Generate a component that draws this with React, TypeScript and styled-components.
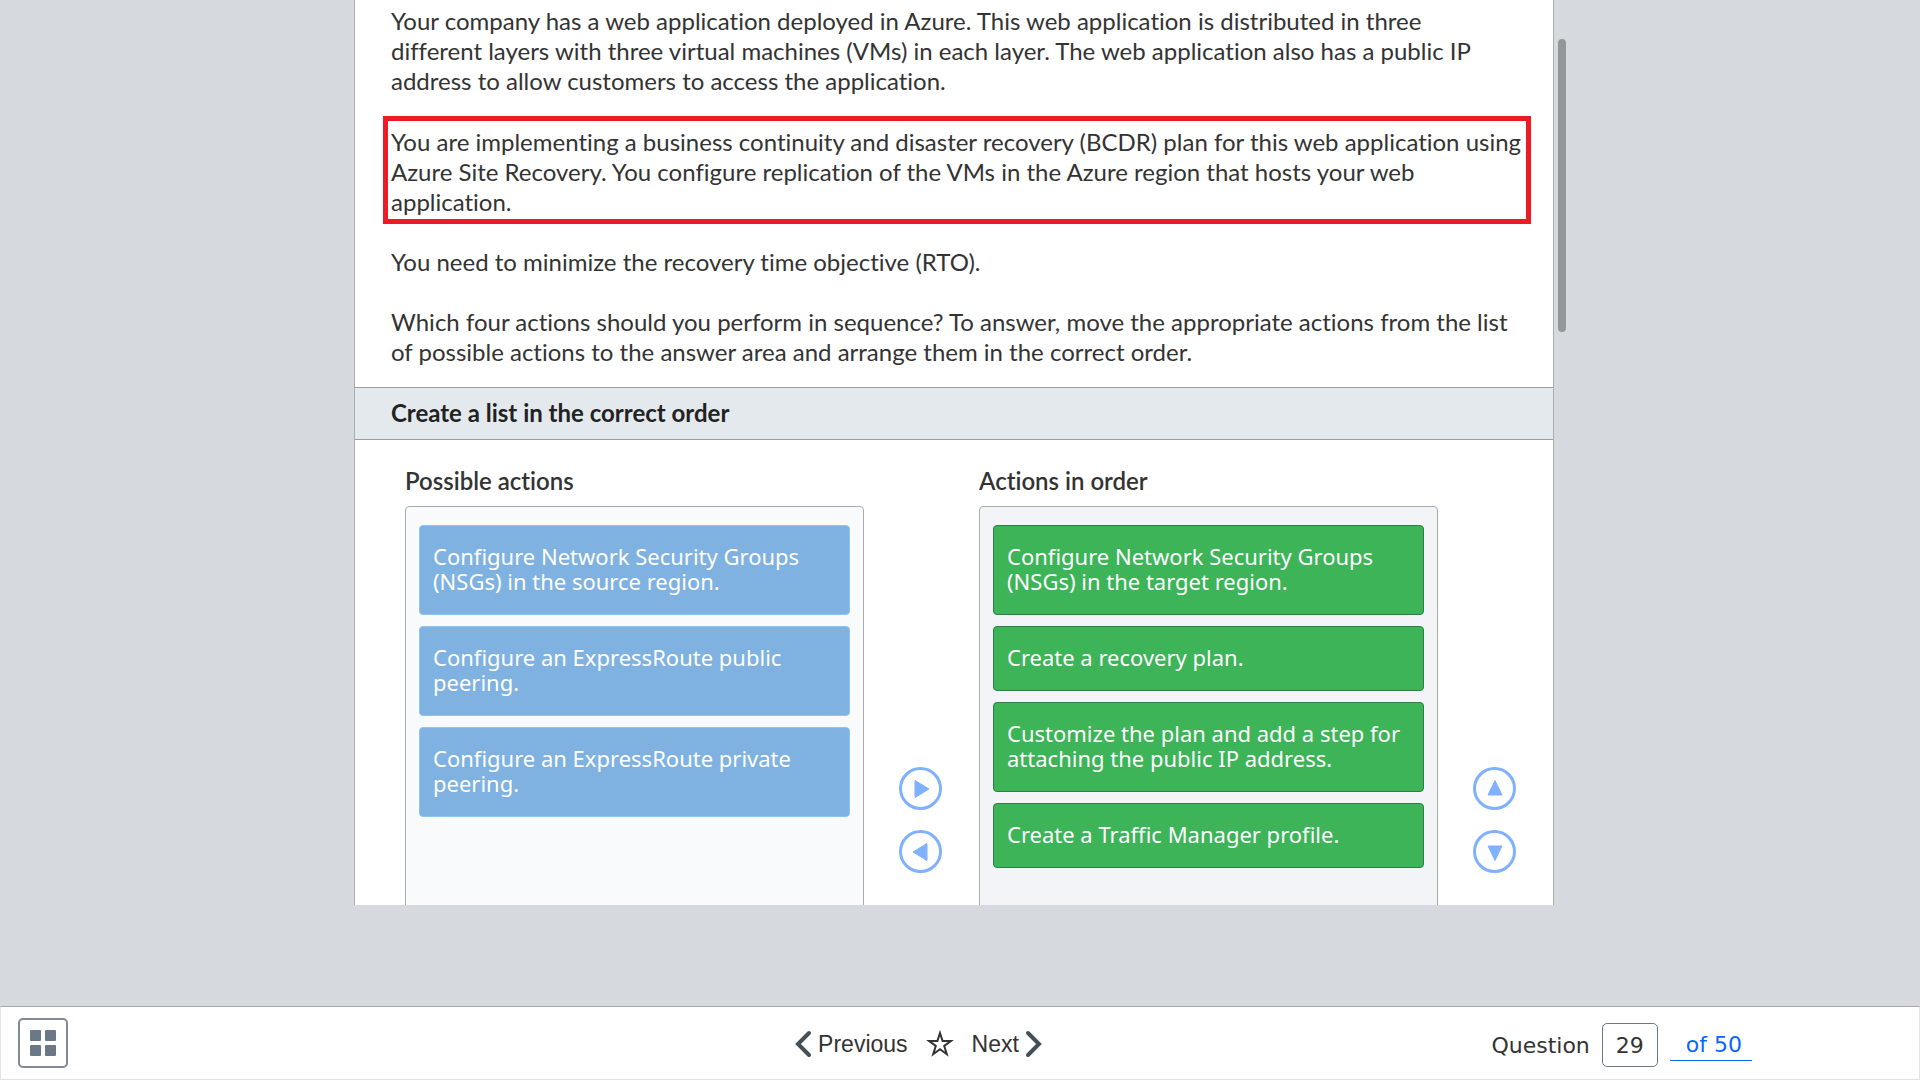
import React, { useState } from 'react';
import styled, { createGlobalStyle } from 'styled-components';

const GlobalStyle = createGlobalStyle`
  * { box-sizing: border-box; }
  html, body { margin: 0; padding: 0; }
  body {
    background: #d6d9de;
    color: #333;
    font-family: Lato, "Open Sans", sans-serif;
    font-variant-ligatures: no-common-ligatures;
  }
  button, input { font: inherit; color: inherit; }
`;

const Page = styled.div`
  display: flex;
  flex-direction: column;
  height: 100vh;
  overflow: hidden;
`;

const Stage = styled.main`
  flex: 1;
  min-height: 0;
  display: flex;
  justify-content: center;
  padding-bottom: 101px;
`;

const Card = styled.article`
  width: 100%;
  max-width: 1200px;
  overflow: hidden;
  background: #fff;
  border: solid #aaacae;
  border-width: 0 1px;
`;

const ScrollTrack = styled.div`
  width: 12px;
  padding: 39px 0 0 4px;
`;

const ScrollThumb = styled.div`
  height: 293px;
  border-radius: 4px;
  background: #939799;
`;

const Prompt = styled.section`
  display: flex;
  flex-direction: column;
  gap: 30px;
  padding: 6px 22px 20px 28px;
  font-size: 24px;
  line-height: 30px;
`;

const Paragraph = styled.p`
  margin: 0;
  padding: 0 8px;
`;

const Highlighted = styled(Paragraph)`
  margin: -10px 0 -7px;
  padding: 6px 0 2px 3px;
  border: 5px solid #ed1c24;
`;

const SectionTitle = styled.h2`
  margin: 0;
  padding: 10px 36px 11px;
  border: solid #9b9fa2;
  border-width: 1px 0;
  background: #e4e9ed;
  color: #222;
  font-size: 24px;
  font-weight: 700;
  line-height: 30px;
`;

const Board = styled.div`
  display: grid;
  grid-template-columns: 1fr 115px 1fr 115px;
  padding: 26px 0 26px 50px;
`;

const ListTitle = styled.h3`
  margin: 0;
  padding-bottom: 10px;
  font-size: 24px;
  font-weight: 600;
  line-height: 30px;
`;

const ListBox = styled.ul<{ $shade: string }>`
  display: flex;
  flex-direction: column;
  gap: 11px;
  height: 628px;
  margin: 0;
  padding: 18px 13px;
  list-style: none;
  border: 1px solid #a9abad;
  border-radius: 4px;
  background: ${(p) => p.$shade};
`;

const ActionButton = styled.button<{ $placed?: boolean }>`
  display: block;
  width: 100%;
  padding: 18px 13px 20px;
  border: 1px solid ${(p) => (p.$placed ? '#2b803f' : '#8cc4f2')};
  border-radius: 4px;
  background: ${(p) => (p.$placed ? '#3cb457' : '#7fb2e0')};
  color: #fff;
  font-family: "Noto Sans", "Open Sans", sans-serif;
  font-size: 22px;
  line-height: 25px;
  text-align: left;
  cursor: pointer;
`;

const Movers = styled.div`
  display: flex;
  flex-direction: column;
  justify-content: center;
  gap: 20px;
  padding: 40px 0 0 35px;
`;

const RoundButton = styled.button`
  width: 43px;
  height: 43px;
  padding: 0;
  border: 3px solid #80b1ff;
  border-radius: 50%;
  background: #fff;
  color: #80b1ff;
  display: grid;
  place-items: center;
  cursor: pointer;
`;

const Footer = styled.footer`
  display: grid;
  grid-template-columns: 1fr auto 1fr;
  align-items: center;
  height: 74px;
  padding: 0 100px 0 17px;
  border: 1px solid #e3e4e5;
  border-top-color: #a5abaf;
  background: #fff;
`;

const GridButton = styled.button`
  display: grid;
  grid-template-columns: 11px 11px;
  grid-auto-rows: 11px;
  place-content: center;
  gap: 4px;
  width: 50px;
  height: 50px;
  padding: 0;
  border: 2px solid #7f8b97;
  border-radius: 5px;
  background: #fff;
  cursor: pointer;
`;

const Tile = styled.span`
  border-radius: 1px;
  background: #6b7885;
`;

const Nav = styled.nav`
  display: flex;
  align-items: center;
  gap: 18px;
  padding-top: 2px;
  font-family: "Liberation Sans", Arial, sans-serif;
  font-size: 23px;
`;

const NavButton = styled.button`
  display: flex;
  align-items: center;
  gap: 6px;
  padding: 0;
  border: 0;
  background: none;
  cursor: pointer;
`;

const Pager = styled.div`
  justify-self: end;
  display: flex;
  align-items: center;
  gap: 12px;
  padding-top: 4px;
  margin-right: 67px;
  font-family: "DejaVu Sans", Verdana, sans-serif;
  font-size: 22px;
`;

const PageInput = styled.input`
  width: 56px;
  height: 44px;
  padding: 0;
  border: 1px solid #6b7885;
  border-radius: 5px;
  background: #fff;
  text-align: center;
`;

const TotalLink = styled.a`
  padding: 0 10px 0 16px;
  border-bottom: 1px solid #0a66ff;
  color: #0a66ff;
  line-height: 30px;
  text-decoration: none;
`;

const possible = [
  'Configure Network Security Groups (NSGs) in the source region.',
  'Configure an ExpressRoute public peering.',
  'Configure an ExpressRoute private peering.',
];

const ordered = [
  'Configure Network Security Groups (NSGs) in the target region.',
  'Create a recovery plan.',
  'Customize the plan and add a step for attaching the public IP address.',
  'Create a Traffic Manager profile.',
];

const arrows = {
  right: 'M5 2.5 L19 11 L5 19.5 Z',
  left: 'M17 2.5 L3 11 L17 19.5 Z',
  up: 'M11 2.5 L18 17 L4 17 Z',
  down: 'M11 19.5 L18 5 L4 5 Z',
};

function MoveButton({ dir, label }: { dir: keyof typeof arrows; label: string }) {
  return (
    <RoundButton type="button" aria-label={label}>
      <svg width="22" height="22" viewBox="0 0 22 22" aria-hidden="true">
        <path d={arrows[dir]} fill="currentColor" stroke="currentColor" strokeLinejoin="round" />
      </svg>
    </RoundButton>
  );
}

function Chevron({ d }: { d: string }) {
  return (
    <svg width="18" height="28" viewBox="0 0 18 28" fill="none" stroke="#435059" strokeWidth="4" strokeLinecap="round" aria-hidden="true">
      <path d={d} />
    </svg>
  );
}

export default function App() {
  const [page, setPage] = useState('29');
  return (
    <Page>
      <GlobalStyle />
      <Stage>
        <Card>
          <Prompt>
            <Paragraph>
              Your company has a web application deployed in Azure. This web application is distributed in three
              <br />
              different layers with three virtual machines (VMs) in each layer. The web application also has a public IP
              address to allow customers to access the application.
            </Paragraph>
            <Highlighted>
              You are implementing a business continuity and disaster recovery (BCDR) plan for this web application using
              Azure Site Recovery. You configure replication of the VMs in the Azure region that hosts your web
              application.
            </Highlighted>
            <Paragraph>You need to minimize the recovery time objective (RTO).</Paragraph>
            <Paragraph>
              Which four actions should you perform in sequence? To answer, move the appropriate actions from the list
              of possible actions to the answer area and arrange them in the correct order.
            </Paragraph>
          </Prompt>
          <SectionTitle>Create a list in the correct order</SectionTitle>
          <Board>
            <div>
              <ListTitle>Possible actions</ListTitle>
              <ListBox $shade="#f9fafc">
                {possible.map((text) => (
                  <li key={text}><ActionButton type="button">{text}</ActionButton></li>
                ))}
              </ListBox>
            </div>
            <Movers>
              <MoveButton dir="right" label="Add to answer" />
              <MoveButton dir="left" label="Remove from answer" />
            </Movers>
            <div>
              <ListTitle>Actions in order</ListTitle>
              <ListBox $shade="#f3f4f7">
                {ordered.map((text) => (
                  <li key={text}><ActionButton type="button" $placed>{text}</ActionButton></li>
                ))}
              </ListBox>
            </div>
            <Movers>
              <MoveButton dir="up" label="Move up" />
              <MoveButton dir="down" label="Move down" />
            </Movers>
          </Board>
        </Card>
        <ScrollTrack><ScrollThumb /></ScrollTrack>
      </Stage>
      <Footer>
        <GridButton type="button" aria-label="All questions"><Tile /><Tile /><Tile /><Tile /></GridButton>
        <Nav>
          <NavButton type="button"><Chevron d="M15 3 L4 14 L15 25" />Previous</NavButton>
          <NavButton type="button" aria-label="Bookmark">
            <svg width="28" height="28" viewBox="0 0 28 28" fill="none" stroke="#333" strokeWidth="2" aria-hidden="true">
              <path d="M14 3 L16.6 11 H25 L18.2 16 L20.8 24.2 L14 19.2 L7.2 24.2 L9.8 16 L3 11 H11.4 Z" />
            </svg>
          </NavButton>
          <NavButton type="button">Next<Chevron d="M3 3 L14 14 L3 25" /></NavButton>
        </Nav>
        <Pager>
          <label htmlFor="page">Question</label>
          <PageInput id="page" value={page} onChange={(e) => setPage(e.target.value)} />
          <TotalLink href="#last">of 50</TotalLink>
        </Pager>
      </Footer>
    </Page>
  );
}
